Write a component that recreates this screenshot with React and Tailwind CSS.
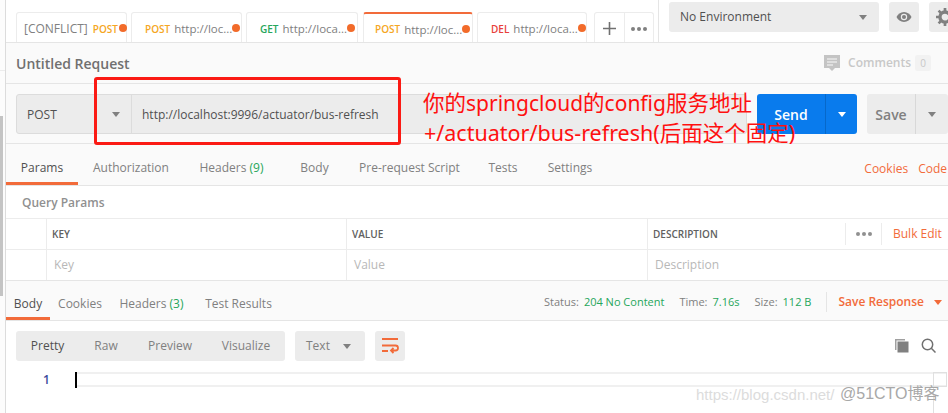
const font = { fontFamily: '"Open Sans", "Noto Sans", sans-serif' };

function Dot() {
  return <span className="w-2 h-2 rounded-full bg-[#f26b2a] shrink-0 -mt-[2px]" />;
}

function ReqTab({ className, method, color, url, active }) {
  return (
    <div className={`${className} shrink-0 h-[30px] bg-white border border-b-0 border-[#ececec] rounded-t-[3px] flex items-center pt-[3px] ${active ? 'pl-[11px] border-t-2 border-t-[#f26b3a]' : 'pl-[13px]'}`}>
      <span className={`${color} font-semibold text-[10px] whitespace-nowrap mr-[4px]`}>{method}</span>
      <span className="text-[#808080] text-[11.5px] whitespace-nowrap">{url}</span>
      <Dot />
    </div>
  );
}

function Caret({ className = 'border-t-[#808080]' }) {
  return <span className={`w-0 h-0 border-x-[4px] border-x-transparent border-t-[5px] ${className}`} />;
}

function Tab({ children, active, w }) {
  return (
    <div className={`h-full flex items-center justify-center relative text-[12px] pt-[7px] shrink-0 ${w} ${active ? 'text-[#505050]' : 'text-[#808080]'}`}>
      {children}
      {active && <span className="absolute left-0 right-0 bottom-0 h-[3px] bg-[#f26b3a]" />}
    </div>
  );
}

function PillBtn({ children, className = '' }) {
  return <div className={`bg-[#ececec] rounded-[3px] flex items-center justify-center shrink-0 ${className}`}>{children}</div>;
}

function Dots({ color }) {
  return (
    <>
      <span className={`w-1 h-1 rounded-full ${color}`} />
      <span className={`w-1 h-1 rounded-full ${color}`} />
      <span className={`w-1 h-1 rounded-full ${color}`} />
    </>
  );
}

export default function App() {
  return (
    <div style={font} className="relative w-[948px] h-[413px] overflow-hidden bg-white flex">
      {/* sidebar edge */}
      <div className="w-[6px] shrink-0 bg-[#fcfcfc] border-r border-[#dcdcdc] flex flex-col">
        <div className="h-[71px] border-b border-[#ececec]" />
        <div className="h-[45px]" />
        <div className="w-[3px] h-[180px] bg-[#c4c4c4]" />
      </div>

      <div className="w-[942px] flex flex-col">
        {/* Top tabs */}
        <div className="h-[43px] shrink-0 border-b border-[#e5e5e5] flex items-end pl-[10px]">
          <div className="w-[111px] shrink-0 mr-[4px] h-[30px] bg-white border border-b-0 border-[#ececec] rounded-t-[3px] flex items-center pt-[3px] pl-[7px] text-[12px]">
            <span className="text-[#808080] whitespace-nowrap mr-[5px]">[CONFLICT]</span>
            <span className="text-[#f5a623] font-semibold text-[10px] mr-[1px]">POST</span>
            <Dot />
          </div>
          <ReqTab className="w-[111px] mr-[4px]" method="POST" color="text-[#f5a623]" url="http://loc..." />
          <ReqTab className="w-[112px] mr-[5px]" method="GET" color="text-[#26a65b]" url="http://loca..." />
          <ReqTab className="w-[110px] mr-[4px]" method="POST" color="text-[#f5a623]" url="http://loc..." active />
          <ReqTab className="w-[110px]" method="DEL" color="text-[#e8403a]" url="http://loca..." />
          <div className="ml-[7px] w-[60px] shrink-0 h-[30px] bg-white border border-b-0 border-[#ececec] rounded-t-[3px] flex">
            <div className="w-[30px] border-r border-[#ececec] flex items-center justify-center pt-[2px]">
              <svg width="13" height="13" viewBox="0 0 13 13"><path d="M6.500 0v13M0 6.500h13" stroke="#707070" strokeWidth="1.600" /></svg>
            </div>
            <div className="flex-1 flex items-center justify-center gap-[2px] pt-[2px]">
              <Dots color="bg-[#808080]" />
            </div>
          </div>
          <div className="self-stretch ml-[4px] border-r border-[#e5e5e5]" />
          <div className="self-start mt-[2px] ml-[10px] flex gap-[10px]">
            <PillBtn className="w-[210px] h-[30px] !justify-between pl-[11px] pr-[12px] text-[12px] text-[#505050]">
              <span>No Environment</span>
              <Caret />
            </PillBtn>
            <PillBtn className="w-[30px] h-[30px]">
              <svg width="16" height="12" viewBox="0 0 16 12"><path d="M8 1C4.500 1 1.800 3.200.5 6c1.300 2.800 4 5 7.500 5s6.200-2.200 7.500-5C14.200 3.200 11.500 1 8 1z" fill="#808080" /><circle cx="8" cy="6" r="3.200" fill="#ececec" /><circle cx="8" cy="6" r="2" fill="#808080" /></svg>
            </PillBtn>
            <PillBtn className="w-[30px] h-[30px] !justify-start pl-[7px]">
              <svg width="18" height="18" viewBox="0 0 16 16" className="shrink-0"><circle cx="8" cy="8" r="4.500" fill="none" stroke="#808080" strokeWidth="3" /><path d="M8 0v3M8 13v3M0 8h3M13 8h3M2.300 2.300l2 2M11.700 11.700l2 2M2.300 13.700l2-2M11.700 4.300l2-2" stroke="#808080" strokeWidth="2.400" /></svg>
            </PillBtn>
          </div>
        </div>

        {/* Request name row */}
        <div className="h-[41px] shrink-0 bg-[#fafafa] border-b border-[#e5e5e5] flex items-center pl-[10px]">
          <span className="text-[14px] font-semibold text-[#707070] flex-1">Untitled Request</span>
          <svg width="16" height="16" viewBox="0 0 16 16" className="mr-[8px]"><path d="M0 0h16v13h-5l-3 3-3-3H0z" fill="#c4c4c4" /><path d="M3 4h10M3 7h10M3 10h6" stroke="#fafafa" strokeWidth="1.200" /></svg>
          <span className="text-[12px] font-semibold text-[#c8c8c8]">Comments</span>
          <span className="ml-[4px] w-[16px] h-[16px] rounded-[2px] bg-[#f2f2f2] text-[10px] text-[#c8c8c8] flex items-center justify-center">0</span>
          <span className="w-[17px]" />
        </div>

        {/* URL row */}
        <div className="h-[60px] shrink-0 bg-[#fafafa] border-b border-[#e5e5e5] flex items-start pt-[10px] pl-[10px]">
          <div className="w-[731px] h-[40px] flex bg-[#ececec] border border-[#dcdcdc] rounded-[3px]">
            <div className="w-[115px] border-r border-[#dcdcdc] flex items-center justify-between pl-[10px] pr-[11px] text-[12px] text-[#505050]">
              <span className="pt-[2px]">POST</span>
              <Caret />
            </div>
            <div className="flex-1 flex items-center pl-[10px] pt-[1px] text-[12px] text-[#505050]">http://localhost:9996/actuator/bus-refresh</div>
          </div>
          <div className="ml-[10px] w-[100px] h-[40px] bg-[#097bed] rounded-[3px] flex text-white">
            <div className="w-[69px] border-r border-[#0668ca] flex items-center justify-center text-[14px] font-semibold">Send</div>
            <div className="flex-1 flex items-center justify-center"><Caret className="border-t-white" /></div>
          </div>
          <div className="ml-[10px] w-[81px] h-[40px] bg-[#ececec] rounded-[3px] flex text-[#808080]">
            <div className="w-[49px] border-r border-[#d8d8d8] flex items-center justify-center text-[14px] font-semibold">Save</div>
            <div className="flex-1 flex items-center justify-center"><Caret /></div>
          </div>
        </div>

        {/* Request tabs */}
        <div className="h-[42px] shrink-0 bg-[#fafafa] border-b border-[#e5e5e5] flex items-stretch">
          <Tab active w="w-[72px]">Params</Tab>
          <Tab w="w-[106px]">Authorization</Tab>
          <Tab w="w-[95px]"><span>Headers <span className="text-[#26a65b]">(9)</span></span></Tab>
          <Tab w="w-[71px]">Body</Tab>
          <Tab w="w-[119px]">Pre-request Script</Tab>
          <Tab w="w-[68px]">Tests</Tab>
          <Tab w="w-[66px]">Settings</Tab>
          <div className="flex-1 flex items-center justify-end gap-[10px] text-[12px] text-[#f26b3a] mr-[1px] pt-[9px]">
            <span>Cookies</span>
            <span>Code</span>
          </div>
        </div>

        {/* Query params */}
        <div className="h-[33px] shrink-0 flex items-center pl-[16px] pt-[2px] text-[12px] font-semibold text-[#909090] border-b border-[#ececec]">Query Params</div>

        {/* Table */}
        <div className="shrink-0 grid grid-cols-[41px_300px_301px_300px] border-b border-[#e5e5e5]">
          <div className="h-[31px] border-b border-r border-[#ececec]" />
          <div className="h-[31px] border-b border-r border-[#ececec] flex items-center pl-[5px] text-[10px] font-semibold text-[#606060]">KEY</div>
          <div className="h-[31px] border-b border-r border-[#ececec] flex items-center pl-[5px] text-[10px] font-semibold text-[#606060]">VALUE</div>
          <div className="h-[31px] border-b border-[#ececec] flex items-center pl-[5px] text-[10px] font-semibold text-[#606060]">
            <span className="flex-1">DESCRIPTION</span>
            <div className="h-[22px] border-x border-[#ececec] w-[37px] shrink-0 flex items-center justify-center gap-[2px]">
              <Dots color="bg-[#909090]" />
            </div>
            <span className="text-[12px] font-normal text-[#f26b3a] w-[66px] shrink-0 pl-[11px] whitespace-nowrap">Bulk Edit</span>
          </div>
          <div className="h-[30px] border-r border-[#ececec]" />
          <div className="h-[30px] border-r border-[#ececec] flex items-center pl-[7px] text-[12px] text-[#b8b8b8]">Key</div>
          <div className="h-[30px] border-r border-[#ececec] flex items-center pl-[7px] text-[12px] text-[#b8b8b8]">Value</div>
          <div className="h-[30px] flex items-center pl-[7px] text-[12px] text-[#b8b8b8]">Description</div>
        </div>

        {/* Response tabs */}
        <div className="h-[40px] shrink-0 bg-[#fafafa] border-b border-[#e5e5e5] flex items-stretch">
          <Tab active w="w-[44px]">Body</Tab>
          <Tab w="w-[60px]">Cookies</Tab>
          <Tab w="w-[83px]"><span>Headers <span className="text-[#26a65b]">(3)</span></span></Tab>
          <Tab w="w-[91px]">Test Results</Tab>
          <div className="flex-1 flex items-center justify-end text-[11px] text-[#808080] pt-[3px]">
            <span>Status:</span><span className="ml-[5px] text-[#26a65b]">204 No Content</span>
            <span className="ml-[15px]">Time:</span><span className="ml-[5px] text-[#26a65b]">7.16s</span>
            <span className="ml-[15px]">Size:</span><span className="ml-[5px] text-[#26a65b]">112 B</span>
            <span className="ml-[15px] h-[20px] border-r border-[#e5e5e5]" />
            <span className="ml-[11px] text-[12px] font-semibold text-[#f26b3a]">Save Response</span>
            <span className="ml-[10px] mr-[6px] flex"><Caret className="border-t-[#f26b3a]" /></span>
          </div>
        </div>

        {/* Response toolbar */}
        <div className="h-[51px] shrink-0 flex items-start pt-[10px] pl-[10px] pr-[11px]">
          <PillBtn className="w-[269px] h-[30px] !justify-start text-[12px] text-[#808080]">
            <span className="w-[63px] text-center text-[#505050]">Pretty</span>
            <span className="w-[54px] text-center">Raw</span>
            <span className="w-[74px] text-center">Preview</span>
            <span className="w-[78px] text-center">Visualize</span>
          </PillBtn>
          <PillBtn className="ml-[10px] w-[70px] h-[30px] !justify-between pl-[11px] pr-[14px] text-[12px] text-[#808080]">
            <span>Text</span>
            <Caret />
          </PillBtn>
          <PillBtn className="ml-[10px] w-[30px] h-[30px]">
            <svg width="17" height="16" viewBox="0 0 17 16" fill="none" stroke="#f26b3a" strokeWidth="1.800"><path d="M0 1h16M0 7.500h13.500a2.500 2.500 0 0 1 0 5H9M11.500 10l-2.500 2.500 2.500 2.500M0 13h6" /></svg>
          </PillBtn>
          <div className="flex-1" />
          <div className="flex items-center gap-[12px] mt-[7px] mr-[1px]">
            <svg width="15" height="15" viewBox="0 0 15 15"><path d="M1 1h10v1.500H2.500V12H1z" fill="#a0a0a0" /><rect x="3.500" y="3.500" width="11" height="11" fill="#808080" /></svg>
            <svg width="15" height="15" viewBox="0 0 15 15" fill="none" stroke="#707070" strokeWidth="1.500"><circle cx="6.500" cy="6.500" r="5.200" /><path d="M10.300 10.300L14.500 14.500" /></svg>
          </div>
        </div>

        {/* Code row */}
        <div className="relative h-[15px] shrink-0 border-y-2 border-[#f0f0f0] flex items-center ml-[69px] mr-[1px]">
          <span className="absolute left-[-32px] text-[12px] font-semibold text-[#3b4a9a]">1</span>
          <span className="absolute left-0 top-[-2px] w-[2px] h-[16px] bg-black" />
          <span className="absolute right-0 top-[-2px] w-[14px] h-[15px] border border-[#e0e0e0]" />
          <span className="absolute right-[13px] top-[13px] w-px h-[30px] bg-[#e0e0e0]" />
        </div>
      </div>

      {/* Annotation overlay */}
      <div className="absolute left-[94px] top-[77px] w-[307px] h-[68px] border-[3px] border-[#fb1a14] rounded-[3px]" />
      <div className="absolute left-[423px] top-[88px] text-[21px] leading-[29px] text-[#ff1010] whitespace-nowrap" style={{ fontFamily: '"Noto Sans", "Noto Sans CJK SC", sans-serif' }}>
        <div><span className="text-[21.5px]">你的</span>springcloud<span className="text-[21.5px]">的</span>config<span className="text-[21.5px]">服务地址</span></div>
        <div className="ml-[1px] text-[21.5px]">+/actuator/bus-refresh(后面这个固定)</div>
      </div>

      {/* Watermark */}
      <div className="absolute left-[696px] top-[385px] text-[15px] leading-[20px] text-[#dcdcdc] whitespace-nowrap" style={{ fontFamily: '"Liberation Sans", "Noto Sans CJK SC", sans-serif' }}>https://blog.csdn.net/</div>
      <div className="absolute left-[840px] top-[384px] text-[16px] leading-[20px] text-[#a8a8a8] whitespace-nowrap" style={{ fontFamily: '"Liberation Sans", "Noto Sans CJK SC", sans-serif' }}>@51CTO博客</div>
    </div>
  );
}
